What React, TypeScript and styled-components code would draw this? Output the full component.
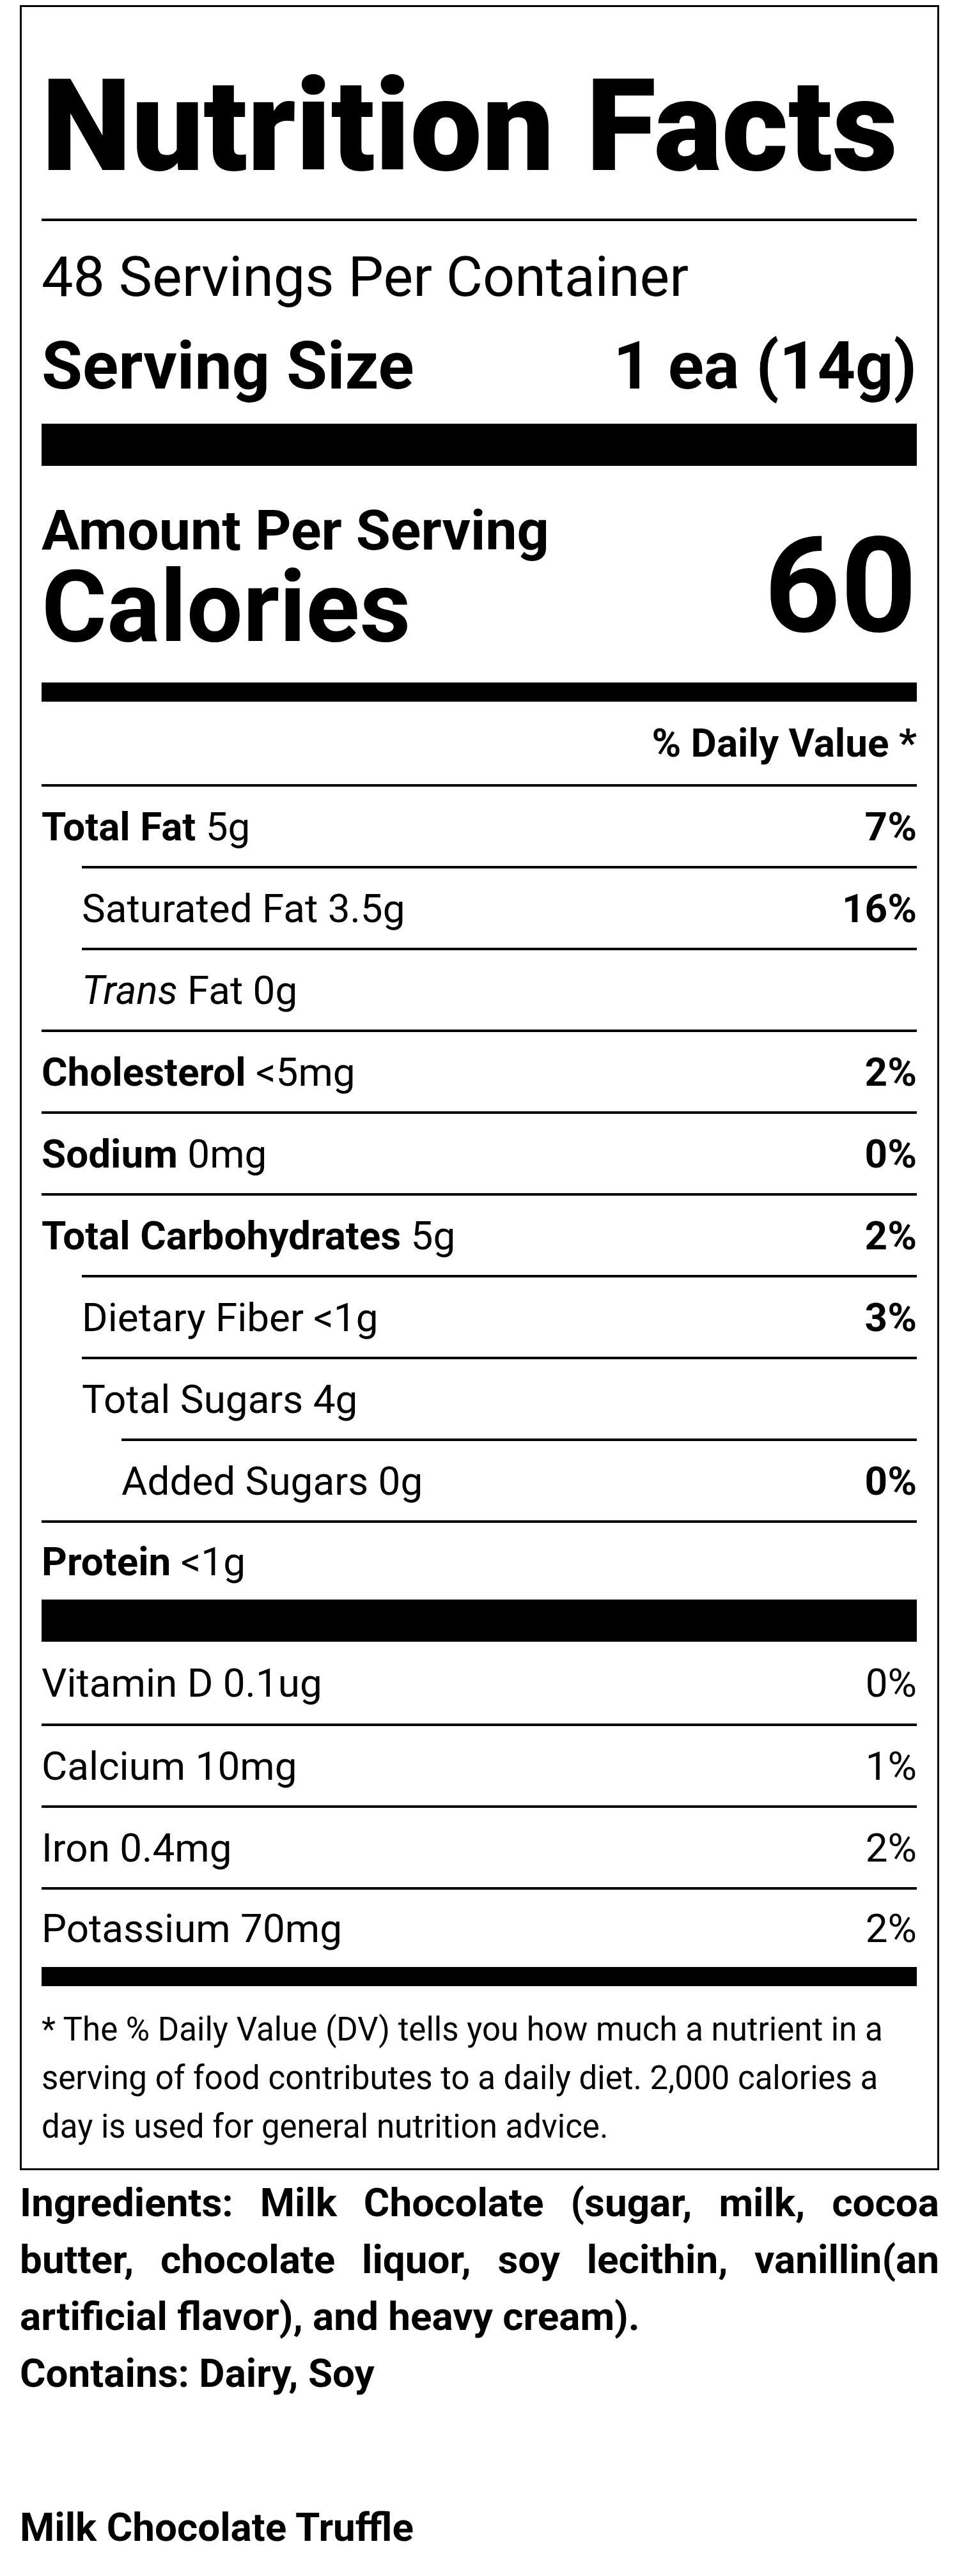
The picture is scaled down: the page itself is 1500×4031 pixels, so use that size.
import React from "react";
import styled, { createGlobalStyle } from "styled-components";

const GlobalStyle = createGlobalStyle`
  html, body { margin: 0; padding: 0; background: #ffffff; }
  body {
    font-family: Roboto, "Liberation Sans", Arial, sans-serif;
    color: #000000;
  }
  * { box-sizing: border-box; }
`;

const Page = styled.div`
  padding: 8px 31px 32px 31px;
  width: 1500px;
`;

const Label = styled.section`
  width: 1438px;
  border: 3px solid #000;
  padding: 87px 32px 27px 31px;
`;

const Title = styled.h1`
  margin: 0;
  font-size: 200px;
  line-height: 200px;
  font-weight: 900;
  white-space: nowrap;
`;

const Rule = styled.div<{ $h: number; $mt?: number }>`
  height: ${(p) => p.$h}px;
  margin-top: ${(p) => p.$mt ?? 0}px;
  background: #000;
`;

const Servings = styled.div`
  margin-top: 34px;
  font-size: 88px;
  line-height: 1.2;
  font-weight: 400;
`;

const ServingSize = styled.div`
  margin-top: 25px;
  display: flex;
  justify-content: space-between;
  font-size: 104px;
  line-height: 1.2;
  font-weight: 700;
`;

const CaloriesBlock = styled.div`
  padding: 58px 0 40px;
  display: flex;
  justify-content: space-between;
  align-items: flex-end;
`;

const CaloriesLeft = styled.div`
  display: flex;
  flex-direction: column;
`;

const AmountPer = styled.div`
  font-size: 88px;
  line-height: 85px;
  font-weight: 700;
`;

const CaloriesWord = styled.div`
  font-size: 156px;
  line-height: 156px;
  font-weight: 700;
`;

const CaloriesValue = styled.div`
  font-size: 208px;
  line-height: 208px;
  font-weight: 700;
  margin-bottom: 7px;
`;

const DVHeader = styled.div`
  height: 129px;
  display: flex;
  justify-content: flex-end;
  align-items: center;
  font-size: 62px;
  font-weight: 700;
`;

const Row = styled.div<{ $indent?: number; $h?: number; $noRule?: boolean }>`
  margin-left: ${(p) => p.$indent ?? 0}px;
  height: ${(p) => (p.$h ?? 124) + (p.$noRule ? 0 : 4)}px;
  border-top: ${(p) => (p.$noRule ? "none" : "4px solid #000")};
  display: flex;
  justify-content: space-between;
  align-items: center;
  font-size: 62px;
  font-weight: 400;
  white-space: nowrap;
`;

const Name = styled.span`
  font-weight: 700;
`;

const Amount = styled.span`
  font-weight: 400;
`;

const Pct = styled.span<{ $bold?: boolean }>`
  font-weight: ${(p) => (p.$bold ? 700 : 400)};
`;

const Footnote = styled.p`
  margin: 0;
  padding-top: 30px;
  font-size: 51px;
  line-height: 76px;
  font-weight: 400;
`;

const Ingredients = styled.p`
  margin: 6px 0 0;
  width: 1438px;
  font-size: 62px;
  line-height: 89px;
  font-weight: 700;
  text-align: justify;
`;

const Contains = styled.p`
  margin: 0;
  font-size: 62px;
  line-height: 89px;
  font-weight: 700;
`;

const ProductName = styled.p`
  margin: 152px 0 0;
  font-size: 62px;
  line-height: 89px;
  font-weight: 700;
`;

type Nutrient = {
  name?: string;
  italic?: string;
  rest?: string;
  amount: string;
  pct?: string;
  indent?: number;
  h?: number;
};

const nutrients: Nutrient[] = [
  { name: "Total Fat", amount: "5g", pct: "7%" },
  { rest: "Saturated Fat", amount: "3.5g", pct: "16%", indent: 63 },
  { italic: "Trans", rest: "Fat", amount: "0g", indent: 63 },
  { name: "Cholesterol", amount: "<5mg", pct: "2%" },
  { name: "Sodium", amount: "0mg", pct: "0%" },
  { name: "Total Carbohydrates", amount: "5g", pct: "2%" },
  { rest: "Dietary Fiber", amount: "<1g", pct: "3%", indent: 63 },
  { rest: "Total Sugars", amount: "4g", indent: 63 },
  { rest: "Added Sugars", amount: "0g", pct: "0%", indent: 125 },
  { name: "Protein", amount: "<1g", h: 120 },
];

const vitamins = [
  { label: "Vitamin D 0.1ug", pct: "0%", h: 128, noRule: true },
  { label: "Calcium 10mg", pct: "1%", h: 124 },
  { label: "Iron 0.4mg", pct: "2%", h: 124 },
  { label: "Potassium 70mg", pct: "2%", h: 121 },
];

export default function App() {
  return (
    <>
      <GlobalStyle />
      <Page>
        <Label>
          <Title>Nutrition Facts</Title>
          <Rule $h={4} $mt={44} />
          <Servings>48 Servings Per Container</Servings>
          <ServingSize>
            <span>Serving Size</span>
            <span>1 ea (14g)</span>
          </ServingSize>
          <Rule $h={66} $mt={28} />
          <CaloriesBlock>
            <CaloriesLeft>
              <AmountPer>Amount Per Serving</AmountPer>
              <CaloriesWord>Calories</CaloriesWord>
            </CaloriesLeft>
            <CaloriesValue>60</CaloriesValue>
          </CaloriesBlock>
          <Rule $h={30} />
          <DVHeader>% Daily Value *</DVHeader>
          {nutrients.map((n, i) => (
            <Row key={i} $indent={n.indent} $h={n.h}>
              <span>
                {n.name && <Name>{n.name} </Name>}
                {n.italic && <i>{n.italic} </i>}
                {n.rest && <Amount>{n.rest} </Amount>}
                <Amount>{n.amount}</Amount>
              </span>
              {n.pct && <Pct $bold>{n.pct}</Pct>}
            </Row>
          ))}
          <Rule $h={66} />
          {vitamins.map((v, i) => (
            <Row key={i} $h={v.h} $noRule={v.noRule}>
              <span>{v.label}</span>
              <Pct>{v.pct}</Pct>
            </Row>
          ))}
          <Rule $h={30} />
          <Footnote>
            * The % Daily Value (DV) tells you how much a nutrient in a serving of food
            contributes to a daily diet. 2,000 calories a day is used for general
            nutrition advice.
          </Footnote>
        </Label>
        <Ingredients>
          Ingredients: Milk Chocolate (sugar, milk, cocoa butter, chocolate liquor, soy
          lecithin, vanillin(an artificial flavor), and heavy cream).
        </Ingredients>
        <Contains>Contains: Dairy, Soy</Contains>
        <ProductName>Milk Chocolate Truffle</ProductName>
      </Page>
    </>
  );
}
